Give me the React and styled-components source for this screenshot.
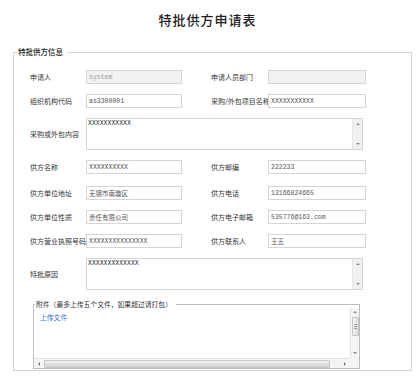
import React from "react";
import styled, { createGlobalStyle } from "styled-components";

const GlobalStyle = createGlobalStyle`
  html, body { margin: 0; padding: 0; background: #fff; }
  body { width: 420px; height: 376px; overflow: hidden; font-family: "Noto Sans CJK SC", "Noto Sans", sans-serif; }
`;

const labelColor = "#333";
const lineColor = "#d4d4d4";
const monoStack = `"Liberation Mono", "Noto Sans CJK SC", monospace`;

const Page = styled.div`
  width: 420px;
  padding-top: 12px;
`;

const Title = styled.h1`
  margin: 0;
  text-align: center;
  font-size: 13px;
  line-height: 16px;
  font-weight: 500;
  letter-spacing: 1px;
  color: #222;
  padding-right: 5px;
`;

const Section = styled.fieldset`
  box-sizing: border-box;
  margin: 19px 8px 0 13px;
  padding: 0 0 8px 16px;
  min-width: 0;
  height: 324px;
  border: 1px solid ${lineColor};
`;

const Legend = styled.legend`
  margin-left: -13px;
  padding: 0 4px 0 1px;
  font-size: 7.5px;
  line-height: 10px;
  font-weight: 500;
  color: #222;
`;

const Form = styled.div`
  display: flex;
  flex-direction: column;
  gap: 10px;
  padding-top: 13px;
`;

const Row = styled.div`
  display: flex;
  align-items: center;
  height: ${(p) => p.$h || 14}px;
  margin-top: ${(p) => p.$extra || 0}px;
`;

const Label = styled.span`
  flex: none;
  width: ${(p) => p.$w}px;
  margin-left: ${(p) => p.$ml || 0}px;
  font-size: 7px;
  line-height: 10px;
  color: ${labelColor};
  white-space: nowrap;
`;

const Input = styled.input`
  box-sizing: border-box;
  flex: none;
  position: relative;
  width: ${(p) => p.$w}px;
  height: 14px;
  margin: 0;
  padding: 0 2px;
  border: 1px solid ${lineColor};
  background: ${(p) => (p.disabled ? "#f2f2f2" : "#fff")};
  font-family: ${monoStack};
  font-size: 6.5px;
  color: ${(p) => (p.disabled ? "#999" : "#555")};
  outline: none;
`;

const TextBox = styled.div`
  box-sizing: border-box;
  flex: none;
  display: flex;
  width: 277px;
  height: ${(p) => p.$h}px;
  border: 1px solid ${lineColor};
  background: #fff;
`;

const TextContent = styled.div`
  flex: 1;
  padding: 1px 1px;
  font-family: ${monoStack};
  font-size: 6.5px;
  line-height: 8px;
  color: #333;
`;

const VBar = styled.div`
  flex: none;
  width: 9px;
  display: flex;
  flex-direction: column;
  justify-content: space-between;
  align-items: center;
  background: #f0f0f0;
  border-left: 1px solid #e6e6e6;
  padding: 4px 0;
`;

const Arrow = styled.span`
  width: 0;
  height: 0;
  border-left: 2px solid transparent;
  border-right: 2px solid transparent;
  ${(p) =>
    p.$dir === "up" ? "border-bottom: 2px solid #888;" : "border-top: 2px solid #888;"}
`;

const SideArrow = styled.span`
  width: 0;
  height: 0;
  border-top: 2px solid transparent;
  border-bottom: 2px solid transparent;
  ${(p) =>
    p.$dir === "left" ? "border-right: 2px solid #777;" : "border-left: 2px solid #777;"}
`;

const Attach = styled.fieldset`
  box-sizing: border-box;
  margin: 10px 0 0 3px;
  padding: 0;
  min-width: 0;
  width: 327px;
  height: 69px;
  border: 1px solid #bdbdbd;
`;

const AttachLegend = styled.legend`
  margin-left: 1px;
  padding: 0 4px 0 1px;
  font-size: 6.8px;
  line-height: 8px;
  color: #333;
`;

const Scroller = styled.div`
  display: grid;
  grid-template-columns: 1fr 9px;
  grid-template-rows: 1fr 10px;
  height: 100%;
`;

const ScrollContent = styled.div`
  padding: 5px 6px 0;
  font-size: 6.8px;
  line-height: 9px;
`;

const UploadLink = styled.a`
  color: #3a6fd8;
  text-decoration: none;
  cursor: pointer;
`;

const VTrack = styled.div`
  display: flex;
  flex-direction: column;
  align-items: center;
  background: #f4f4f4;
  border-left: 1px solid #e4e4e4;
  padding: 3px 0 4px;
`;

const VThumb = styled.div`
  box-sizing: border-box;
  width: 7px;
  height: 19px;
  margin-top: 4px;
  border: 1px solid #c4c4c4;
  border-radius: 1px;
  background: linear-gradient(90deg, #f4f4f4, #dcdcdc);
  display: flex;
  flex-direction: column;
  justify-content: center;
  align-items: center;
  gap: 1px;
  & > i {
    display: block;
    width: 3px;
    height: 1px;
    background: #999;
  }
`;

const Spacer = styled.div`
  flex: 1;
`;

const HTrack = styled.div`
  display: flex;
  align-items: center;
  background: #f4f4f4;
  border-top: 1px solid #e4e4e4;
  padding: 0 4px;
  gap: 4px;
`;

const HThumb = styled.div`
  box-sizing: border-box;
  flex: 1;
  height: 8px;
  border: 1px solid #c6c6c6;
  border-radius: 1px;
  background: linear-gradient(180deg, #f2f2f2, #cfcfcf);
  margin-right: 10px;
`;

const Corner = styled.div`
  background: #f4f4f4;
`;

const Field = ({ label, value, w = 96, lw = 56, ml = 0, disabled }) => (
  <>
    <Label $w={lw} $ml={ml}>{label}</Label>
    <Input $w={w} value={value} disabled={disabled} readOnly />
  </>
);

const Area = ({ label, text, h }) => (
  <Row $h={h}>
    <Label $w={56}>{label}</Label>
    <TextBox $h={h}>
      <TextContent>{text}</TextContent>
      <VBar>
        <Arrow $dir="up" />
        <Arrow $dir="down" />
      </VBar>
    </TextBox>
  </Row>
);

const rows = [
  [
    { label: "申请人", value: "system", disabled: true },
    { label: "申请人员部门", value: "", disabled: true },
  ],
  [
    { label: "组织机构代码", value: "as3300001" },
    { label: "采购/外包项目名称", value: "XXXXXXXXXXX" },
  ],
];

const supplierRows = [
  [
    { label: "供方名称", value: "XXXXXXXXXX" },
    { label: "供方邮编", value: "222233" },
  ],
  [
    { label: "供方单位地址", value: "无锡市南璇区" },
    { label: "供方电话", value: "13166824665" },
  ],
  [
    { label: "供方单位性质", value: "责任有限公司" },
    { label: "供方电子邮箱", value: "535776@163.com" },
  ],
  [
    { label: "供方营业执照号码", value: "XXXXXXXXXXXXXXX" },
    { label: "供方联系人", value: "王五" },
  ],
];

const PairRow = ({ pair, extra }) => (
  <Row $extra={extra}>
    <Field {...pair[0]} />
    <Field {...pair[1]} ml={29} lw={57} w={98} />
  </Row>
);

export default function App() {
  return (
    <Page>
      <GlobalStyle />
      <Title>特批供方申请表</Title>
      <Section>
        <Legend>特批供方信息</Legend>
        <Form>
          {rows.map((pair, i) => (
            <PairRow key={i} pair={pair} />
          ))}
          <Area label="采购或外包内容" text="XXXXXXXXXXX" h={32} />
          {supplierRows.map((pair, i) => (
            <PairRow key={i} pair={pair} extra={i === 1 ? 2 : 0} />
          ))}
          <Area label="特批原因" text="XXXXXXXXXXXXX" h={32} />
        </Form>
        <Attach>
          <AttachLegend>附件（最多上传五个文件，如果超过请打包）</AttachLegend>
          <Scroller>
            <ScrollContent>
              <UploadLink>上传文件</UploadLink>
            </ScrollContent>
            <VTrack>
              <Arrow $dir="up" />
              <VThumb>
                <i />
                <i />
                <i />
              </VThumb>
              <Spacer />
              <Arrow $dir="down" />
            </VTrack>
            <HTrack>
              <SideArrow $dir="left" />
              <HThumb />
              <SideArrow $dir="right" />
            </HTrack>
            <Corner />
          </Scroller>
        </Attach>
      </Section>
    </Page>
  );
}
